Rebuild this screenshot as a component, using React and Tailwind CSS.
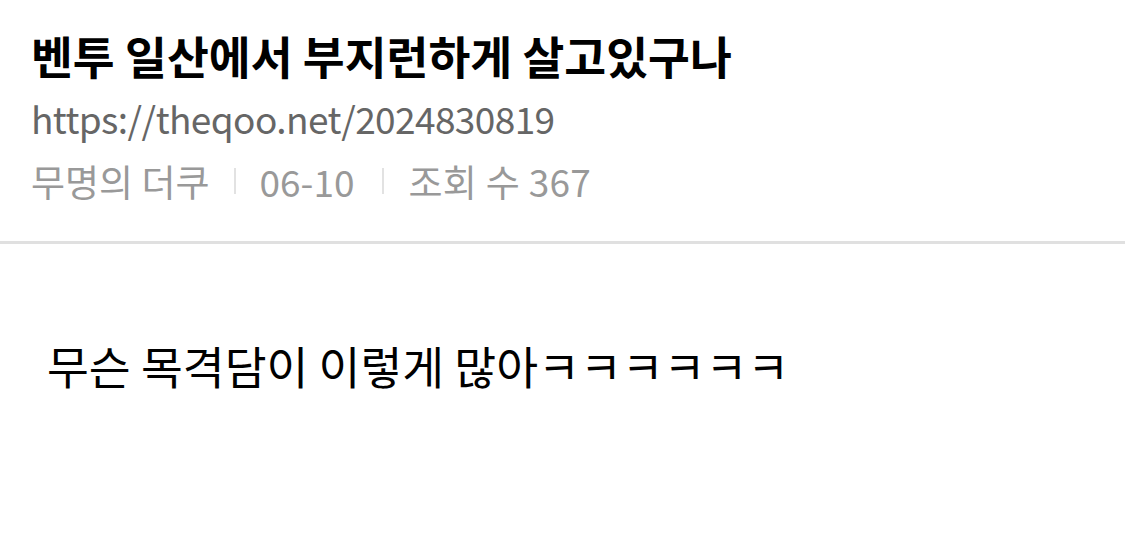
import React from 'react';

function PostHeader() {
  return (
    <div className="px-[31px] pt-[29px] pb-[38px]">
      <h1 className="text-[45.5px] leading-[52px] font-bold text-black">
        벤투 일산에서 부지런하게 살고있구나
      </h1>
      <p className="mt-[15px] text-[37px] leading-[44px] text-[#666] tracking-[-0.6px]">
        https://theqoo.net/2024830819
      </p>
      <div className="mt-[19px] flex items-center text-[37px] leading-[44px] text-[#999]">
        <span>무명의 더쿠</span>
        <span className="mx-[24px] h-[26px] w-[2px] bg-[#e2e2e2]" />
        <span>06-10</span>
        <span className="ml-[28px] mr-[24px] h-[26px] w-[2px] bg-[#e2e2e2]" />
        <span className="tracking-[0.3px]">조회 수 367</span>
      </div>
    </div>
  );
}

export default function App() {
  return (
    <div
      className="w-[1125px] h-[545px] bg-white overflow-hidden"
      style={{ fontFamily: '"Noto Sans CJK KR", "Noto Sans", sans-serif' }}
    >
      <PostHeader />
      <div className="h-[3px] bg-[#e0e0e0]" />
      <div className="px-[47px] pt-[95px]">
        <p className="text-[45.5px] leading-[52px] text-black">
          무슨 목격담이 이렇게 많아ㅋㅋㅋㅋㅋㅋ
        </p>
      </div>
    </div>
  );
}
